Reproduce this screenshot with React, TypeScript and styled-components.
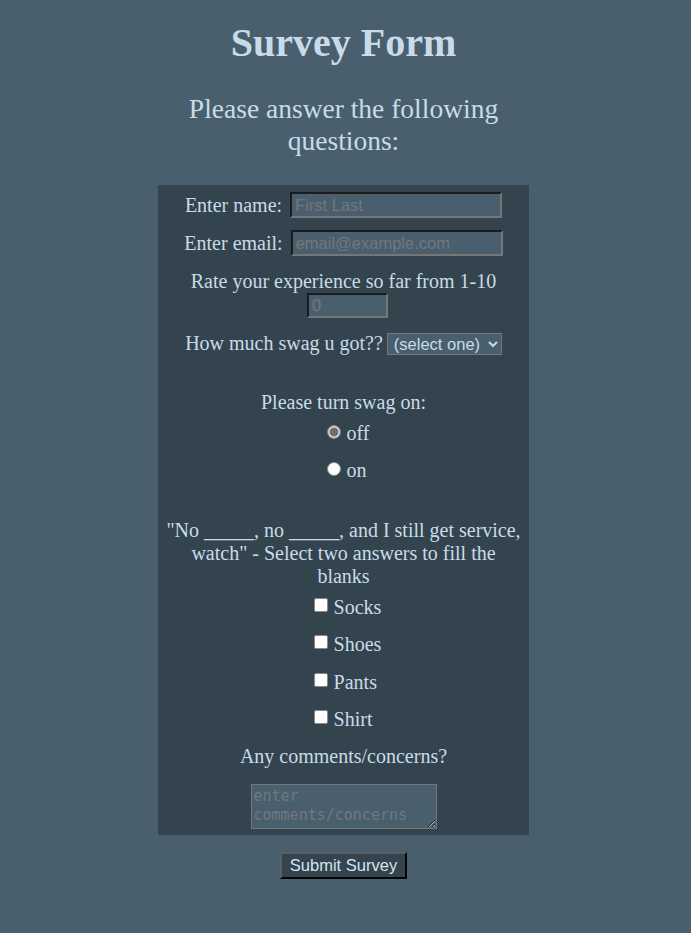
import React from "react";
import styled, { createGlobalStyle } from "styled-components";

const GlobalStyle = createGlobalStyle`
  html, body {
    margin: 0;
    padding: 0;
    background: #4a5f6d;
  }
  body {
    font-family: "Liberation Serif", "Times New Roman", serif;
    color: #c9dbe8;
  }
`;

const Page = styled.div`
  min-height: 933px;
  box-sizing: border-box;
  padding: 20px 4px 40px 0;
  display: flex;
  flex-direction: column;
  align-items: center;
`;

const Title = styled.h1`
  margin: 0;
  font-size: 40px;
  font-weight: bold;
  line-height: 46px;
  text-align: center;
`;

const Subtitle = styled.h2`
  margin: 27px 0 0;
  width: 371px;
  font-size: 27.5px;
  font-weight: normal;
  line-height: 31.5px;
  text-align: center;
`;

const Form = styled.form`
  margin-top: 29px;
  width: 371px;
  box-sizing: border-box;
  padding: 7px 7px 6px;
  background: #34444f;
  display: flex;
  flex-direction: column;
  align-items: center;
  font-size: 20px;
  line-height: 23px;
`;

const Row = styled.div<{ $top: number; $gap: number }>`
  margin-top: ${({ $top }) => $top}px;
  display: flex;
  align-items: center;
  gap: ${({ $gap }) => $gap}px;
`;

const Text = styled.div<{ $top: number }>`
  margin-top: ${({ $top }) => $top}px;
  text-align: center;
`;

const Field = styled.input<{ $w: number; $h: number; $shift?: number }>`
  width: ${({ $w }) => $w}px;
  height: ${({ $h }) => $h}px;
  box-sizing: border-box;
  margin: 0 0 0 ${({ $shift }) => $shift || 0}px;
  padding: 1px 3px;
  background: #4a5f6d;
  color: #c9dbe8;
  border: 2px solid;
  border-color: #1c1c1c #767676 #767676 #1c1c1c;
  font-family: "Liberation Sans", Arial, sans-serif;
  font-size: 16.5px;
  outline: none;
  &::placeholder {
    color: #6f7880;
  }
  &::-webkit-inner-spin-button,
  &::-webkit-outer-spin-button {
    -webkit-appearance: none;
    margin: 0;
  }
`;

const Select = styled.select`
  width: 115px;
  height: 22px;
  box-sizing: border-box;
  margin: 0;
  padding: 0 2px;
  background: #4a5f6d;
  color: #c9dbe8;
  border: 1px solid #767676;
  border-radius: 0;
  font-family: "Liberation Sans", Arial, sans-serif;
  font-size: 16.5px;
`;

const OptionGroup = styled.div<{ $top: number; $gap: number; $left: number }>`
  margin-top: ${({ $top }) => $top}px;
  padding-left: ${({ $left }) => $left}px;
  display: flex;
  flex-direction: column;
  align-items: flex-start;
  gap: ${({ $gap }) => $gap}px;
`;

const Option = styled.label`
  height: 23px;
  display: flex;
  align-items: center;
  gap: 6px;
`;

const Radio = styled.input.attrs({ type: "radio" })`
  appearance: none;
  flex-shrink: 0;
  width: 14px;
  height: 14px;
  margin: 0 0 3px;
  border-radius: 50%;
  box-sizing: border-box;
  border: 1px solid #8a8a8a;
  background: #ffffff;
  &:checked {
    background: #6e6e6e;
    box-shadow: inset 0 0 0 1.5px #e6e6e6;
  }
`;

const Check = styled.input.attrs({ type: "checkbox" })`
  appearance: none;
  flex-shrink: 0;
  width: 14px;
  height: 14px;
  margin: 0 0 5px;
  box-sizing: border-box;
  border: 1px solid #8a8a8a;
  border-radius: 2px;
  background: #ffffff;
`;

const Comments = styled.textarea`
  margin-top: 16px;
  width: 186px;
  height: 45px;
  box-sizing: border-box;
  padding: 2px 2px;
  background: #4a5f6d;
  color: #c9dbe8;
  border: 1px solid #767676;
  font-family: "DejaVu Sans Mono", "Liberation Mono", monospace;
  font-size: 15px;
  line-height: 19px;
  outline: none;
  &::placeholder {
    color: #6f7880;
  }
`;

const SubmitButton = styled.button`
  margin-top: 17px;
  width: 127px;
  height: 27px;
  box-sizing: border-box;
  padding: 0;
  background: #34444f;
  color: #d4e3ee;
  border: 2px solid;
  border-color: #5e5e5e #050505 #050505 #5e5e5e;
  font-family: "Liberation Sans", Arial, sans-serif;
  font-size: 16.5px;
`;

const swagOptions = ["off", "on"];
const blanks = ["Socks", "Shoes", "Pants", "Shirt"];

export default function App() {
  return (
    <Page>
      <GlobalStyle />
      <Title>Survey Form</Title>
      <Subtitle>Please answer the following questions:</Subtitle>
      <Form onSubmit={(e) => e.preventDefault()}>
        <Row $top={0} $gap={8}>
          <span>Enter name:</span>
          <Field $w={212} $h={26} type="text" placeholder="First Last" />
        </Row>
        <Row $top={12} $gap={8}>
          <span>Enter email:</span>
          <Field $w={212} $h={26} type="email" placeholder="email@example.com" />
        </Row>
        <Text $top={14}>Rate your experience so far from 1-10</Text>
        <Field $w={81} $h={25} $shift={8} type="number" placeholder="0" />
        <Row $top={14} $gap={4}>
          <span>How much swag u got??</span>
          <Select defaultValue="">
            <option value="">(select one)</option>
            <option value="some">some</option>
            <option value="lots">lots</option>
          </Select>
        </Row>
        <Text $top={36}>Please turn swag on:</Text>
        <OptionGroup $top={8} $gap={14} $left={9}>
          {swagOptions.map((opt, i) => (
            <Option key={opt}>
              <Radio name="swag" value={opt} defaultChecked={i === 0} />
              {opt}
            </Option>
          ))}
        </OptionGroup>
        <Text $top={37}>
          "No _____, no _____, and I still get service, watch" - Select two answers to fill the blanks
        </Text>
        <OptionGroup $top={8} $gap={14.3} $left={8}>
          {blanks.map((item) => (
            <Option key={item}>
              <Check value={item} />
              {item}
            </Option>
          ))}
        </OptionGroup>
        <Text $top={14}>Any comments/concerns?</Text>
        <Comments placeholder="enter comments/concerns" />
      </Form>
      <SubmitButton type="button">Submit Survey</SubmitButton>
    </Page>
  );
}
